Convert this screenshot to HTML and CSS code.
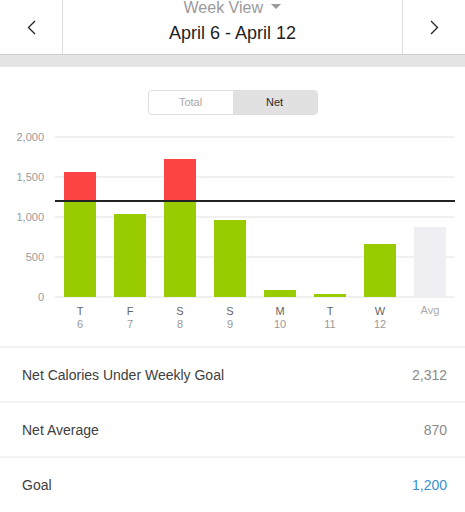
FILE: index.html
```html
<!DOCTYPE html>
<html lang="en">
<head>
    <meta charset="UTF-8">
    <meta name="viewport" content="width=device-width, initial-scale=1.0">
    <title>Week View</title>
    <link rel="stylesheet" href="styles.css">
</head>
<body>
    <div class="topbar">
        <div class="nav-btn nav-prev">
            <svg width="9" height="15" viewBox="0 0 9 15"><path d="M8 1 L1.5 7.5 L8 14" fill="none" stroke="#222" stroke-width="1.3"/></svg>
        </div>
        <div class="title-block">
            <div class="week">Week View <span class="caret"></span></div>
            <div class="range">April 6 - April 12</div>
        </div>
        <div class="nav-btn nav-next">
            <svg width="9" height="15" viewBox="0 0 9 15"><path d="M1 1 L7.5 7.5 L1 14" fill="none" stroke="#222" stroke-width="1.3"/></svg>
        </div>
    </div>
    <div class="band"></div>

    <div class="segmented">
        <div class="seg">Total</div>
        <div class="seg active">Net</div>
    </div>

    <!-- Graphique des calories nettes -->
    <svg class="chart" width="465" height="231" viewBox="0 0 465 231">
        <g class="grid">
            <line x1="55" y1="22" x2="455" y2="22"/>
            <line x1="55" y1="62" x2="455" y2="62"/>
            <line x1="55" y1="102" x2="455" y2="102"/>
            <line x1="55" y1="142" x2="455" y2="142"/>
            <line x1="55" y1="182" x2="455" y2="182"/>
        </g>
        <g class="ylabels">
            <text x="44" y="26">2,000</text>
            <text x="44" y="66">1,500</text>
            <text x="44" y="106">1,000</text>
            <text x="44" y="146">500</text>
            <text x="44" y="186">0</text>
        </g>
        <g class="bars">
            <rect class="over" x="64" y="57" width="32" height="29"/>
            <rect class="ok" x="64" y="86" width="32" height="96"/>
            <rect class="ok" x="114" y="99" width="32" height="83"/>
            <rect class="over" x="164" y="44" width="32" height="42"/>
            <rect class="ok" x="164" y="86" width="32" height="96"/>
            <rect class="ok" x="214" y="105" width="32" height="77"/>
            <rect class="ok" x="264" y="175" width="32" height="7"/>
            <rect class="ok" x="314" y="179" width="32" height="3"/>
            <rect class="ok" x="364" y="129" width="32" height="53"/>
            <rect class="avg" x="414" y="112" width="32" height="70"/>
        </g>
        <line class="goal" x1="55" y1="86" x2="455" y2="86"/>
        <g class="days">
            <text x="80" y="200">T</text>
            <text x="130" y="200">F</text>
            <text x="180" y="200">S</text>
            <text x="230" y="200">S</text>
            <text x="280" y="200">M</text>
            <text x="330" y="200">T</text>
            <text x="380" y="200">W</text>
            <text class="avg-label" x="430" y="199">Avg</text>
        </g>
        <g class="dates">
            <text x="80" y="213">6</text>
            <text x="130" y="213">7</text>
            <text x="180" y="213">8</text>
            <text x="230" y="213">9</text>
            <text x="280" y="213">10</text>
            <text x="330" y="213">11</text>
            <text x="380" y="213">12</text>
        </g>
    </svg>

    <div class="stats">
        <div class="stat-row">
            <span class="stat-label">Net Calories Under Weekly Goal</span>
            <span class="stat-value">2,312</span>
        </div>
        <div class="stat-row">
            <span class="stat-label">Net Average</span>
            <span class="stat-value">870</span>
        </div>
        <div class="stat-row">
            <span class="stat-label">Goal</span>
            <span class="stat-value goal-value">1,200</span>
        </div>
    </div>
</body>
</html>
```

FILE: styles.css
```css
body {
    margin: 0;
    padding: 0;
    font-family: "Liberation Sans", Arial, sans-serif;
    background-color: white;
    overflow: hidden;
}

.topbar {
    display: flex;
    height: 54px;
    border-bottom: 1px solid #cfcfcf;
}

.nav-btn {
    width: 62px;
    display: flex;
    align-items: center;
    justify-content: center;
}

.nav-prev {
    border-right: 1px solid #dcdcdc;
}

.nav-next {
    border-left: 1px solid #dcdcdc;
}

.nav-btn svg {
    display: block;
    margin-top: 1px;
}

.title-block {
    flex: 1;
    text-align: center;
}

.week {
    font-size: 16px;
    line-height: 16px;
    color: #9a9a9a;
}

.caret {
    display: inline-block;
    width: 0;
    height: 0;
    margin-left: 4px;
    vertical-align: 4px;
    border-left: 5px solid transparent;
    border-right: 5px solid transparent;
    border-top: 5px solid #9a9a9a;
}

.range {
    margin-top: 6px;
    font-size: 18px;
    line-height: 22px;
    color: #1e1e1e;
}

.band {
    height: 12px;
    background-color: #e5e5e5;
}

.segmented {
    display: flex;
    width: 168px;
    height: 23px;
    margin: 23px auto 0;
    border: 1px solid #dedede;
    border-radius: 4px;
    overflow: hidden;
}

.seg {
    flex: 1;
    font-size: 11px;
    line-height: 23px;
    text-align: center;
    color: #a8a8a8;
}

.seg.active {
    background-color: #e1e1e1;
    color: #2a2a2a;
}

.chart {
    display: block;
    font-family: "Liberation Sans", Arial, sans-serif;
}

.grid line {
    stroke: #ebebeb;
    stroke-width: 1.5;
}

.ylabels text {
    font-size: 11px;
    fill: #9a9a9a;
    text-anchor: end;
}

.bars .ok {
    fill: #99cc00;
}

.bars .over {
    fill: #fd4444;
}

.bars .avg {
    fill: #eeeef3;
}

.goal {
    stroke: #222;
    stroke-width: 2;
}

.days text {
    font-size: 11px;
    fill: #666;
    text-anchor: middle;
}

.days .avg-label {
    fill: #aaa;
}

.dates text {
    font-size: 11px;
    fill: #999;
    text-anchor: middle;
}

.stat-row {
    display: flex;
    justify-content: space-between;
    align-items: center;
    height: 53px;
    padding: 0 18px 0 22px;
    border-top: 2px solid #f2f2f2;
}

.stat-label {
    font-size: 14px;
    color: #404040;
}

.stat-value {
    font-size: 14px;
    color: #8a8a8a;
}

.goal-value {
    color: #3a8fd2;
}
```
